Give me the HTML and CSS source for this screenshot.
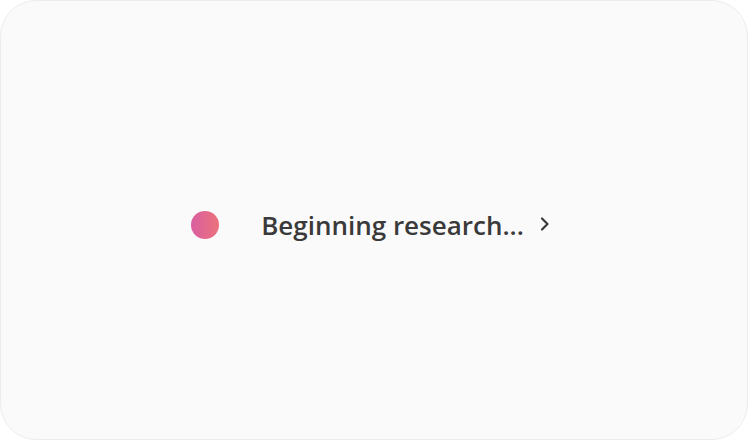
FILE: index.html
```html
<!DOCTYPE html>
<html lang="en">
<head>
<meta charset="utf-8">
<title>Research</title>
<link rel="stylesheet" href="styles.css">
</head>
<body>
<div class="card">
  <div class="status">
    <span class="dot"></span>
    <span class="label">Beginning research...</span>
    <svg class="chevron" width="12" height="16" viewBox="0 0 12 16" aria-hidden="true">
      <path d="M3 2.5 L8.5 8 L3 13.5" fill="none" stroke="#3a3a3a" stroke-width="2.2" stroke-linecap="round" stroke-linejoin="round"/>
    </svg>
  </div>
</div>
</body>
</html>
```
FILE: styles.css
```css
html, body {
  margin: 0;
  padding: 0;
  background: #ffffff;
}

.card {
  box-sizing: border-box;
  width: 748px;
  height: 440px;
  border: 1px solid #ececec;
  border-radius: 36px;
  background: #fafafa;
  display: flex;
  align-items: center;
  justify-content: center;
}

.status {
  display: flex;
  align-items: center;
  margin-top: 9px;
  margin-right: 6px;
}

.dot {
  width: 28px;
  height: 28px;
  border-radius: 50%;
  background: linear-gradient(90deg, #d95fa2, #ec717a);
  margin-right: 42px;
}

.label {
  font-family: "Open Sans", "Noto Sans", sans-serif;
  font-weight: 600;
  font-size: 26px;
  color: #3a3a3a;
  letter-spacing: 0;
}

.chevron {
  margin-left: 15px;
  margin-top: -2px;
}
```
